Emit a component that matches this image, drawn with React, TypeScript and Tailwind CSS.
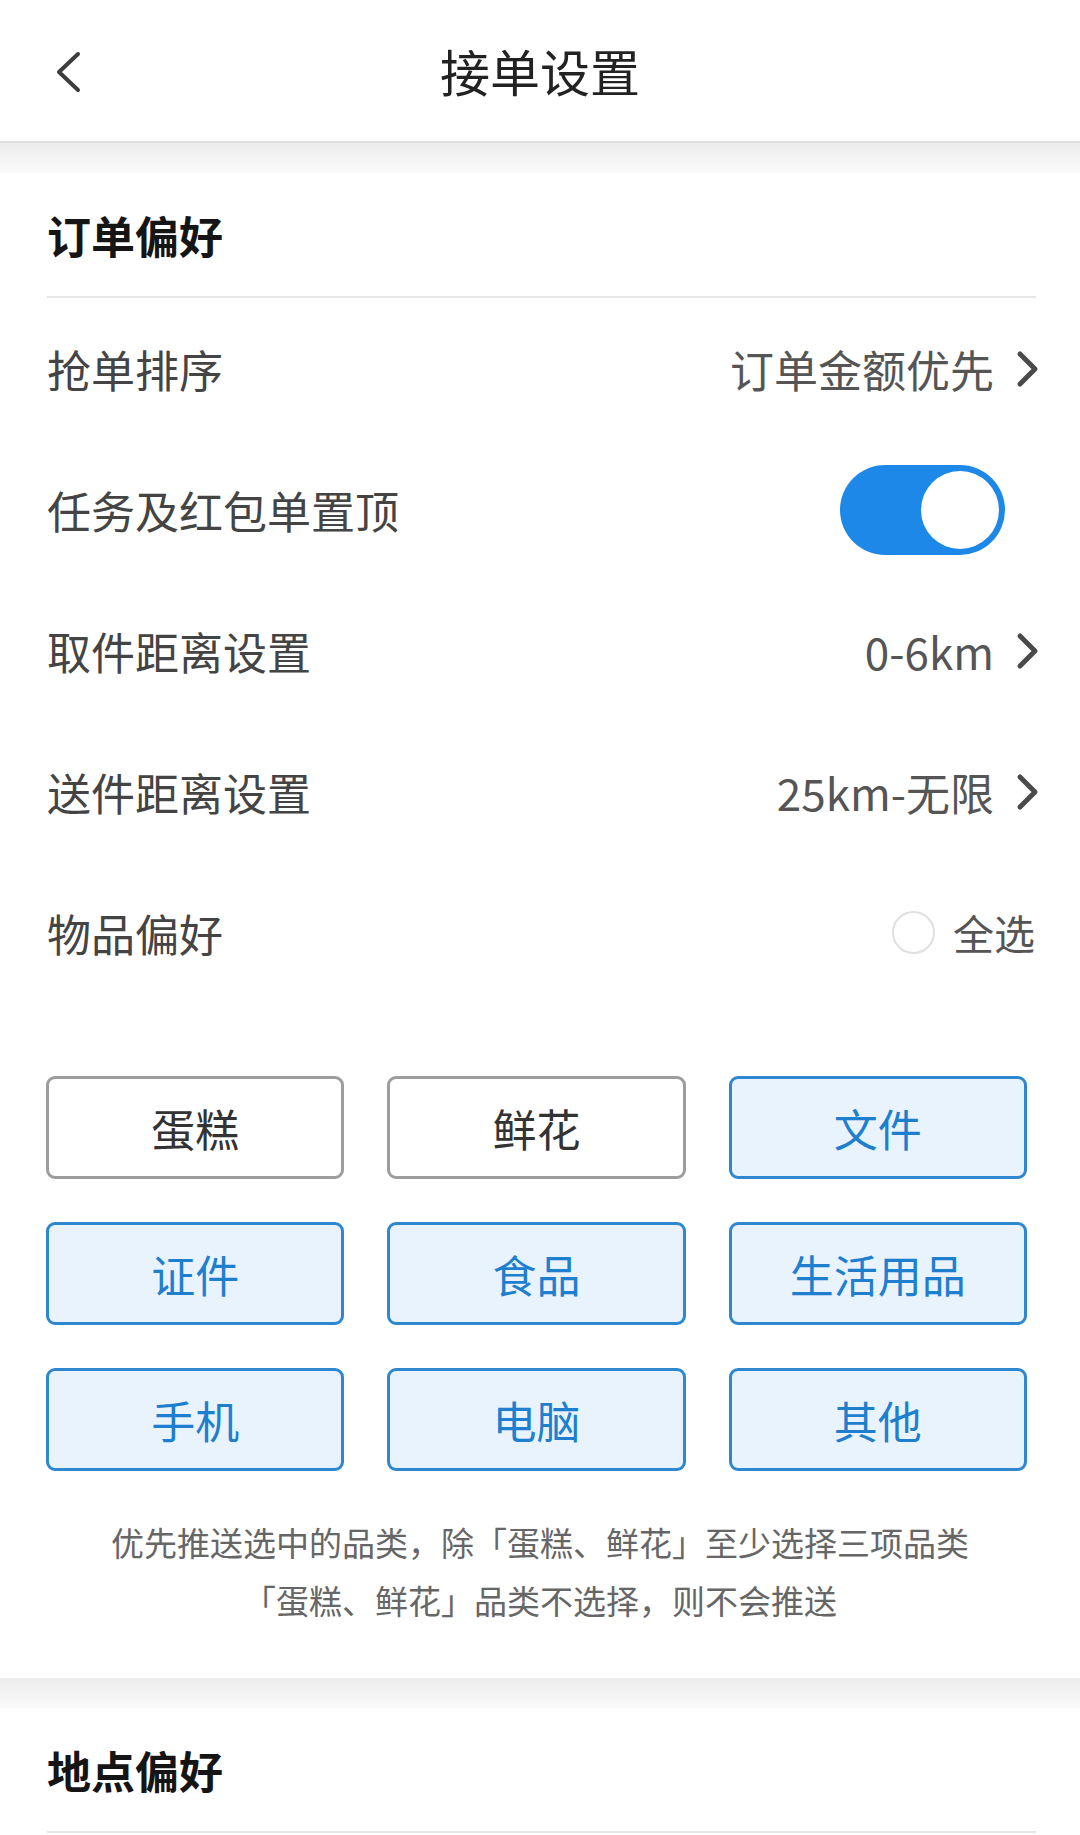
import React, { useState } from 'react';

const FONT = '"Noto Sans CJK SC", "Noto Sans", sans-serif';

const ChevronRight: React.FC = () => (
  <svg className="w-[28px] h-[40px]" viewBox="0 0 28 40" fill="none">
    <path d="M6 5l15 15-15 15" stroke="#4a4a4a" strokeWidth={5} strokeLinecap="round" strokeLinejoin="round" />
  </svg>
);

const categories = [
  { name: '蛋糕', on: false },
  { name: '鲜花', on: false },
  { name: '文件', on: true },
  { name: '证件', on: true },
  { name: '食品', on: true },
  { name: '生活用品', on: true },
  { name: '手机', on: true },
  { name: '电脑', on: true },
  { name: '其他', on: true },
];

const SectionTitle: React.FC<{ title: string }> = ({ title }) => (
  <div className="bg-white">
    <div className="h-[123px] flex items-center pl-[47px]">
      <span className="text-[44px] font-bold text-[#151515] leading-none">{title}</span>
    </div>
    <div className="ml-[47px] mr-[44px] h-[2px] bg-[#e6e6e6]" />
  </div>
);

const Band: React.FC = () => (
  <div className="h-[30px] bg-gradient-to-b from-[#ececec] to-[#fafafa]" />
);

const App: React.FC = () => {
  const [topOn, setTopOn] = useState(true);

  return (
    <div className="w-[1080px] min-h-[1835px] bg-white" style={{ fontFamily: FONT }}>
      {/* Header */}
      <div className="h-[143px] relative flex items-center justify-center border-b-2 border-[#dedede]">
        <button className="absolute left-[50px] top-[50px]">
          <svg className="w-[36px] h-[44px]" viewBox="0 0 36 44" fill="none">
            <path d="M28 4L9 22l19 18" stroke="#3d3d3d" strokeWidth={4} strokeLinecap="round" strokeLinejoin="round" />
          </svg>
        </button>
        <span className="text-[50px] text-[#222] leading-none -mt-[2px]">接单设置</span>
      </div>
      <Band />

      <SectionTitle title="订单偏好" />

      {/* Rows */}
      <div className="flex flex-col text-[#444]">
        <div className="h-[141px] flex items-center justify-between pl-[47px] pr-[38px]">
          <span className="text-[44px] leading-none">抢单排序</span>
          <div className="flex items-center gap-[20px]">
            <span className="text-[44px] leading-none text-[#555]">订单金额优先</span>
            <ChevronRight />
          </div>
        </div>
        <div className="h-[141px] flex items-center justify-between pl-[47px] pr-[75px]">
          <span className="text-[44px] leading-none">任务及红包单置顶</span>
          <button
            onClick={() => setTopOn(!topOn)}
            className={`w-[165px] h-[90px] rounded-full flex items-center p-[6px] ${topOn ? 'bg-[#1e88e8] justify-end' : 'bg-[#ddd] justify-start'}`}
          >
            <span className="w-[78px] h-[78px] rounded-full bg-white block" />
          </button>
        </div>
        <div className="h-[141px] flex items-center justify-between pl-[47px] pr-[38px]">
          <span className="text-[44px] leading-none">取件距离设置</span>
          <div className="flex items-center gap-[20px]">
            <span className="text-[44px] leading-none text-[#555]">0-6km</span>
            <ChevronRight />
          </div>
        </div>
        <div className="h-[141px] flex items-center justify-between pl-[47px] pr-[38px]">
          <span className="text-[44px] leading-none">送件距离设置</span>
          <div className="flex items-center gap-[20px]">
            <span className="text-[44px] leading-none text-[#555]">25km-无限</span>
            <ChevronRight />
          </div>
        </div>
        <div className="h-[141px] flex items-center justify-between pl-[47px] pr-[45px]">
          <span className="text-[44px] leading-none">物品偏好</span>
          <div className="flex items-center gap-[18px]">
            <span className="w-[43px] h-[43px] rounded-full border-2 border-[#e0e0e0] block" />
            <span className="text-[41px] leading-none text-[#555]">全选</span>
          </div>
        </div>
      </div>

      {/* Category chips */}
      <div className="mt-[73px] pl-[46px] pr-[53px] grid grid-cols-3 gap-x-[43px] gap-y-[43px]">
        {categories.map((c) => (
          <div
            key={c.name}
            className={`h-[103px] rounded-[9px] border-[3px] flex items-center justify-center text-[44px] leading-none ${
              c.on ? 'border-[#2f87cf] bg-[#e9f3fd] text-[#1f7fcf]' : 'border-[#9d9d9d] bg-white text-[#333]'
            }`}
          >
            {c.name}
          </div>
        ))}
      </div>

      {/* Notes */}
      <div className="mt-[42px] mb-[49px] flex flex-col items-center text-[33px] leading-[58px] text-[#666]">
        <span>优先推送选中的品类，除「蛋糕、鲜花」至少选择三项品类</span>
        <span>「蛋糕、鲜花」品类不选择，则不会推送</span>
      </div>

      <Band />
      <SectionTitle title="地点偏好" />
    </div>
  );
};

export default App;
